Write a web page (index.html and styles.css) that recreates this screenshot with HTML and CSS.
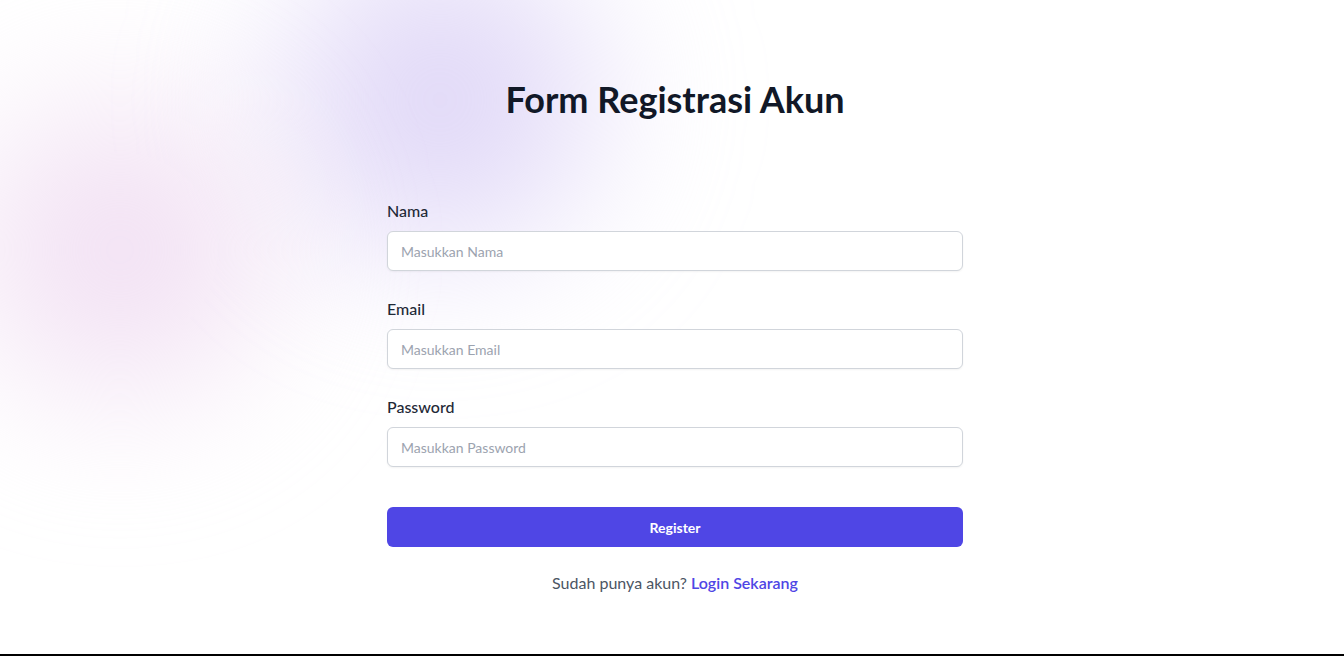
FILE: index.html
```html
<!DOCTYPE html>
<html lang="id">
<head>
<meta charset="utf-8">
<title>Form Registrasi Akun</title>
<link rel="stylesheet" href="styles.css">
</head>
<body>
<div class="page">
  <div class="blob blob-purple"></div>
  <div class="blob blob-pink"></div>
  <main class="content">
    <h1 class="title">Form Registrasi Akun</h1>
    <form class="form">
      <div class="field">
        <label class="label" for="nama">Nama</label>
        <input class="input" id="nama" type="text" placeholder="Masukkan Nama">
      </div>
      <div class="field">
        <label class="label" for="email">Email</label>
        <input class="input" id="email" type="email" placeholder="Masukkan Email">
      </div>
      <div class="field">
        <label class="label" for="password">Password</label>
        <input class="input" id="password" type="password" placeholder="Masukkan Password">
      </div>
      <button class="btn" type="button">Register</button>
      <p class="footer-text">Sudah punya akun? <a class="link" href="#">Login Sekarang</a></p>
    </form>
  </main>
</div>
<div class="bottom-bar"></div>
</body>
</html>
```

FILE: styles.css
```css
* { box-sizing: border-box; }
html, body { margin: 0; padding: 0; }
body {
  font-family: Lato, "Noto Sans", sans-serif;
  background: #ffffff;
  color: #111827;
  height: 656px;
  overflow: hidden;
  display: flex;
  flex-direction: column;
}
.page {
  position: relative;
  flex: 1;
  overflow: hidden;
}
.blob {
  position: absolute;
  border-radius: 50%;
  filter: blur(60px);
  pointer-events: none;
}
.blob-purple {
  left: 220px;
  top: -100px;
  width: 440px;
  height: 400px;
  background: radial-gradient(circle, rgba(210,198,244,0.85) 0%, rgba(220,210,246,0.5) 45%, rgba(235,228,250,0) 75%);
}
.blob-pink {
  left: -90px;
  top: 50px;
  width: 420px;
  height: 400px;
  background: radial-gradient(circle, rgba(236,210,238,0.85) 0%, rgba(240,222,242,0.5) 45%, rgba(245,238,248,0) 75%);
}
.content {
  position: relative;
  display: flex;
  flex-direction: column;
  align-items: center;
  padding-top: 79px;
  padding-left: 6px;
}
.title {
  margin: 0 0 80px;
  font-size: 36px;
  line-height: 40px;
  font-weight: 700;
  color: #111827;
}
.form {
  width: 576px;
  display: flex;
  flex-direction: column;
}
.field {
  display: flex;
  flex-direction: column;
  margin-bottom: 26px;
}
.field:nth-child(3) { margin-bottom: 40px; }
.label {
  font-size: 16px;
  line-height: 24px;
  font-weight: 500;
  color: #1f2937;
  margin-bottom: 8px;
}
.input {
  height: 40px;
  border: 1px solid #d1d5db;
  border-radius: 6px;
  padding: 0 13px;
  font-family: inherit;
  font-size: 14px;
  color: #111827;
  background: #ffffff;
  box-shadow: 0 1px 2px rgba(0,0,0,0.05);
  outline: none;
}
.input::placeholder { color: #9ca3af; }
.btn {
  height: 40px;
  border: none;
  border-radius: 6px;
  background: #4f46e5;
  color: #ffffff;
  font-family: inherit;
  font-size: 14px;
  font-weight: 700;
  cursor: pointer;
}
.footer-text {
  margin: 24px 0 0;
  text-align: center;
  font-size: 16px;
  line-height: 24px;
  color: #4b5563;
}
.link {
  color: #4f46e5;
  font-weight: 600;
  text-decoration: none;
}
.bottom-bar {
  height: 2px;
  background: #000000;
  flex: 0 0 2px;
}
```
